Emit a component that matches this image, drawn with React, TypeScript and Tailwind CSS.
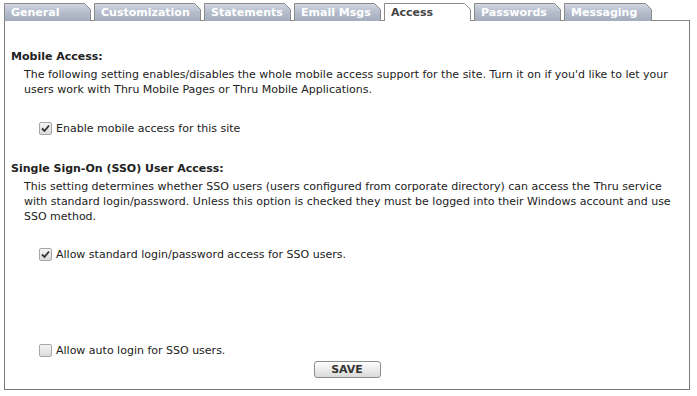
import { ReactNode } from "react";

const tabs = [
    { label: "General", width: 87 },
    { label: "Customization", width: 107 },
    { label: "Statements", width: 87 },
    { label: "Email Msgs", width: 87 },
    { label: "Access", width: 87, active: true },
    { label: "Passwords", width: 87 },
    { label: "Messaging", width: 88 },
];

const Tab = ({ label, width, active }: { label: string; width: number; active?: boolean }) => {
    const h = 18;
    return (
        <div className="relative shrink-0" style={{ width, height: h }}>
            <svg className="absolute inset-0" width={width} height={h}>
                <defs>
                    <linearGradient id="tabgrad" x1="0" y1="0" x2="0" y2="1">
                        <stop offset="0" stopColor="#d3d8e2" />
                        <stop offset="0.5" stopColor="#b5bdcc" />
                        <stop offset="1" stopColor="#a4adbf" />
                    </linearGradient>
                </defs>
                <path
                    d={`M0.5 ${h} V0.5 H${width - 6.5} L${width - 0.5} 6.5 V${h}`}
                    fill={active ? "#ffffff" : "url(#tabgrad)"}
                    stroke="#8a8a8a"
                />
            </svg>
            <span
                className={`relative block pl-[7px] pt-[2px] text-[11px] font-bold leading-[15px] ${active ? "text-[#444]" : "text-white"}`}
            >
                {label}
            </span>
        </div>
    );
};

const Check = ({ checked, children }: { checked?: boolean; children: ReactNode }) => (
    <label className="flex items-center gap-[4px] pl-[28px]">
        <span className="flex h-[13px] w-[13px] items-center justify-center rounded-[2px] border border-[#a6a6a6] bg-gradient-to-b from-[#f4f4f4] to-[#dcdcdc]">
            {checked && (
                <svg width="9" height="9" viewBox="0 0 9 9">
                    <path d="M1 4.5 L3.5 7 L8 1.5" fill="none" stroke="#333" strokeWidth="1.8" />
                </svg>
            )}
        </span>
        <span>{children}</span>
    </label>
);

export default function App() {
    return (
        <div className="h-[396px] w-[697px] bg-white pl-[4px] pt-[3px] text-[11px] leading-[15px] text-[#222]" style={{ fontFamily: '"DejaVu Sans", Verdana, sans-serif' }}>
            <div className="flex gap-[3px]">
                {tabs.map((t) => (
                    <Tab key={t.label} {...t} />
                ))}
            </div>
            <div className="-mt-px flex h-[370px] w-[686px] flex-col border border-[#7a7a7a] border-t-[#8a8a8a] px-[6px]">
                <h2 className="mt-[28px] font-bold">Mobile Access:</h2>
                <p className="mt-[3px] pl-[13px] pr-[10px]">
                    The following setting enables/disables the whole mobile access support for the site. Turn it on if you'd like to let your users work with Thru Mobile Pages or Thru Mobile Applications.
                </p>
                <div className="mt-[24px]">
                    <Check checked>Enable mobile access for this site</Check>
                </div>
                <h2 className="mt-[25px] font-bold">Single Sign-On (SSO) User Access:</h2>
                <p className="mt-[3px] pl-[13px] pr-[4px]">
                    This setting determines whether SSO users (users configured from corporate directory) can access the Thru service with standard login/password. Unless this option is checked they must be logged into their Windows account and use SSO method.
                </p>
                <div className="mt-[23px]">
                    <Check checked>Allow standard login/password access for SSO users.</Check>
                </div>
                <div className="mt-[81px]">
                    <Check>Allow auto login for SSO users.</Check>
                </div>
                <div className="mt-[3px] flex justify-center">
                    <button
                        type="button"
                        className="h-[17px] w-[67px] rounded-[3px] border border-[#8c8c8c] bg-gradient-to-b from-[#ffffff] to-[#d9d9d9] text-[11px] font-bold leading-[15px] text-[#333]"
                    >
                        SAVE
                    </button>
                </div>
            </div>
        </div>
    );
}
